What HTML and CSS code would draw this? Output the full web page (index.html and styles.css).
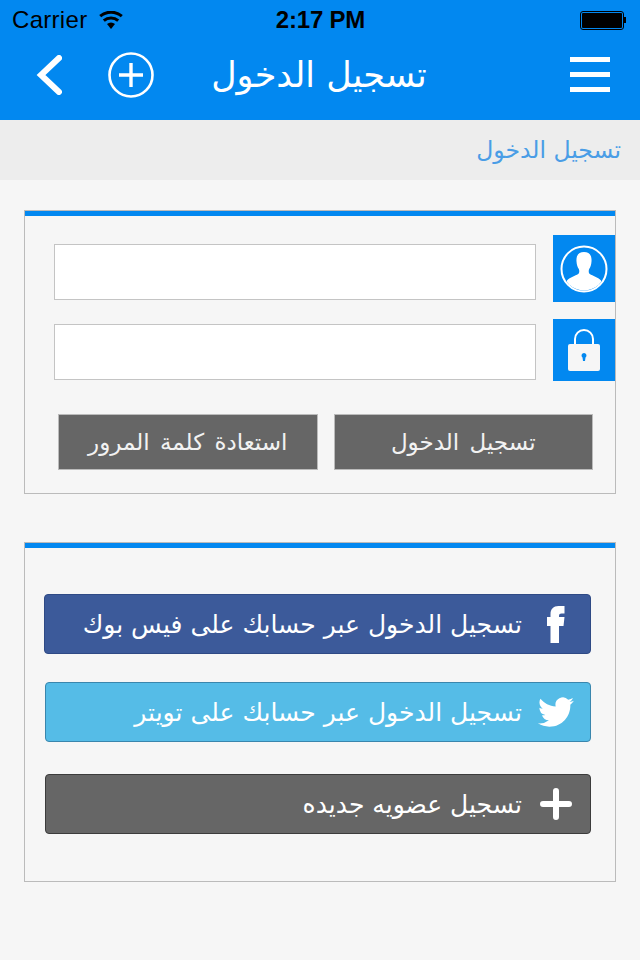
FILE: index.html
```html
<!DOCTYPE html>
<html lang="ar">
<head>
    <meta charset="utf-8">
    <title>تسجيل الدخول</title>
    <link rel="stylesheet" href="styles.css">
</head>
<body>
    <div class="header">
        <div class="status-bar">
            <div class="status-left">
                <span>Carrier</span>
                <svg class="wifi" width="24" height="18" viewBox="0 0 24 18">
                    <path d="M12 18l-4-5a6 6 0 0 1 8 0z" fill="#000"/>
                    <path d="M4.8 9.6a11 11 0 0 1 14.4 0M1.2 5.2a16.5 16.5 0 0 1 21.6 0" fill="none" stroke="#000" stroke-width="3"/>
                </svg>
            </div>
            <div class="status-time">2:17 PM</div>
            <div class="status-right">
                <div class="battery"><div class="battery-fill"></div></div>
                <div class="battery-tip"></div>
            </div>
        </div>
        <div class="nav-bar">
            <svg class="nav-back" width="26" height="40" viewBox="0 0 26 40">
                <path d="M23 3L5 20l18 17" fill="none" stroke="#fff" stroke-width="6" stroke-linecap="round" stroke-linejoin="miter"/>
            </svg>
            <svg class="nav-add" width="46" height="46" viewBox="0 0 46 46">
                <circle cx="23" cy="23" r="21.5" fill="none" stroke="#fff" stroke-width="2.6"/>
                <path d="M23 11v24M11 23h24" fill="none" stroke="#fff" stroke-width="3.4"/>
            </svg>
            <div class="nav-title">تسجيل الدخول</div>
            <div class="nav-menu">
                <span></span>
                <span></span>
                <span></span>
            </div>
        </div>
    </div>

    <div class="breadcrumb">تسجيل الدخول</div>

    <div class="card login-card">
        <div class="field field-user">
            <div class="input"></div>
            <div class="field-icon">
                <svg width="48" height="48" viewBox="0 0 48 48">
                    <defs><clipPath id="face"><circle cx="24" cy="24" r="21.5"/></clipPath></defs>
                    <circle cx="24" cy="24" r="22.5" fill="none" stroke="#fff" stroke-width="2"/>
                    <path clip-path="url(#face)" d="M24 7c-5.500 0-8 3.500-7.500 9.500.2 3 1 5.500 2.300 7.500.7 1.200.7 4-.6 5-3 2-8 3-11.200 6.500-1 1.500 0 14.500 17 14.500s18-13 17-14.500c-3.200-3.500-8.200-4.500-11.200-6.500-1.300-1-1.300-3.800-.6-5 1.300-2 2.100-4.500 2.300-7.500C32 10.500 29.500 7 24 7z" fill="#fff"/>
                </svg>
            </div>
        </div>
        <div class="field field-pass">
            <div class="input"></div>
            <div class="field-icon">
                <svg width="34" height="44" viewBox="0 0 34 44">
                    <path d="M8 20V11a9 9 0 0 1 18 0v9" fill="none" stroke="#fff" stroke-width="2"/>
                    <rect x="1" y="16" width="32" height="27" rx="2" fill="#f6f6f6"/>
                    <path d="M17 25a2.500 2.500 0 0 1 1.500 4.500l-.5 3.500h-2l-.5-3.500A2.500 2.500 0 0 1 17 25z" fill="#0288f0"/>
                </svg>
            </div>
        </div>
        <div class="login-actions">
            <a class="btn-gray">تسجيل الدخول</a>
            <a class="btn-gray">استعادة كلمة المرور</a>
        </div>
    </div>

    <div class="card social-card">
        <a class="social-btn facebook">
            <svg class="social-icon" width="36" height="37" viewBox="-9 0 36 37">
                <path d="M3.500 37V20H0v-9h3.500V8c0-5 3-8 8-8h6v7.500h-3c-1.700 0-2.500.800-2.500 2.500v1h5.500l-1 9h-4.500v17z" fill="#fff"/>
            </svg>
            <span>تسجيل الدخول عبر حسابك على فيس بوك</span>
        </a>
        <a class="social-btn twitter">
            <svg class="social-icon" width="36" height="30" viewBox="0 0 24 20">
                <path d="M23.950 2.570a10 10 0 0 1-2.820.780 4.960 4.960 0 0 0 2.160-2.730c-.950.560-2 .960-3.130 1.190a4.920 4.920 0 0 0-8.380 4.480C7.690 6.100 4.070 4.130 1.640 1.160a4.820 4.820 0 0 0-.67 2.480c0 1.710.87 3.210 2.190 4.100a4.900 4.900 0 0 1-2.230-.62v.06a4.920 4.920 0 0 0 3.950 4.830 5 5 0 0 1-2.210.08 4.940 4.940 0 0 0 4.600 3.420 9.870 9.870 0 0 1-6.100 2.110c-.39 0-.78-.02-1.170-.07a14 14 0 0 0 7.560 2.210c9.050 0 14-7.500 14-13.990 0-.21 0-.42-.02-.63a9.940 9.940 0 0 0 2.410-2.570z" fill="#fff"/>
            </svg>
            <span>تسجيل الدخول عبر حسابك على تويتر</span>
        </a>
        <a class="social-btn signup">
            <svg class="social-icon" width="36" height="36" viewBox="0 0 36 36">
                <path d="M18 5v26M5 18h26" fill="none" stroke="#fff" stroke-width="6" stroke-linecap="round"/>
            </svg>
            <span>تسجيل عضويه جديده</span>
        </a>
    </div>
</body>
</html>
```
FILE: styles.css
```css
body {
    margin: 0;
    background-color: #f6f6f6;
    font-family: "DejaVu Sans", sans-serif;
    color: #fff;
}
.header {
    background-color: #0288f0;
    height: 120px;
}
.status-bar {
    display: grid;
    grid-template-columns: 1fr auto 1fr;
    align-items: center;
    height: 40px;
    padding: 0 14px 0 12px;
    color: #000;
    font-family: "Liberation Sans", sans-serif;
    font-size: 24px;
}
.status-left {
    display: flex;
    align-items: center;
    gap: 12px;
    letter-spacing: 0.3px;
}
.wifi {
    margin-top: -1px;
}
.status-time {
    padding-left: 3px;
    font-weight: bold;
    letter-spacing: -0.2px;
}
.status-right {
    display: flex;
    align-items: center;
    justify-content: flex-end;
}
.battery {
    width: 40px;
    height: 15px;
    padding: 1px;
    border: 1px solid #000;
    border-radius: 3px;
}
.battery-fill {
    height: 100%;
    background-color: #000;
    border-radius: 1px;
}
.battery-tip {
    width: 2px;
    height: 6px;
    background-color: #000;
}
.nav-bar {
    display: flex;
    align-items: center;
    height: 70px;
    padding: 0 30px 0 36px;
}
.nav-add {
    margin-left: 46px;
}
.nav-title {
    flex: 1;
    text-align: center;
    font-size: 35px;
    padding-right: 86px;
}
.nav-menu {
    display: flex;
    flex-direction: column;
    gap: 10px;
    width: 40px;
    margin-bottom: 2px;
}
.nav-menu span {
    height: 5px;
    background-color: #fff;
}
.breadcrumb {
    direction: rtl;
    height: 60px;
    line-height: 60px;
    padding-right: 19px;
    background-color: #ededed;
    color: #4a9de6;
    font-size: 23.5px;
}
.card {
    margin: 30px 24px 0;
    background-color: #f6f6f6;
    border: 1px solid #bbb;
    box-shadow: inset 0 5px 0 #0288f0;
    box-sizing: border-box;
}
.login-card {
    height: 284px;
    padding-top: 24px;
}
.field {
    display: flex;
    justify-content: space-between;
    padding-left: 29px;
}
.field-user {
    height: 84px;
}
.field-pass {
    height: 95px;
}
.input {
    width: 482px;
    height: 56px;
    background-color: #fff;
    border: 1px solid #c4c4c4;
    box-sizing: border-box;
}
.field-user .input {
    margin-top: 9px;
}
.field-pass .input {
    margin-top: 5px;
}
.field-icon {
    display: flex;
    align-items: center;
    justify-content: center;
    width: 62px;
    background-color: #0288f0;
}
.field-user .field-icon {
    height: 67px;
}
.field-pass .field-icon {
    height: 62px;
}
.login-actions {
    display: flex;
    flex-direction: row-reverse;
    justify-content: flex-end;
    gap: 16px;
    padding: 0 22px 0 33px;
}
.btn-gray {
    display: block;
    width: 260px;
    height: 56px;
    line-height: 54px;
    text-align: center;
    background-color: #666;
    border: 1px solid #bbb;
    box-sizing: border-box;
    color: #f2f2f2;
    font-size: 23px;
    word-spacing: 3px;
}
.social-card {
    margin-top: 48px;
    height: 340px;
    padding: 51px 24px 0 19px;
}
.social-btn {
    direction: rtl;
    display: flex;
    align-items: center;
    gap: 16px;
    height: 60px;
    margin-bottom: 28px;
    padding-right: 16px;
    border: 1px solid #2f4a85;
    border-radius: 4px;
    box-sizing: border-box;
    font-size: 25px;
    color: #fff;
}
.social-icon {
    flex: none;
}
.facebook {
    background-color: #3c5a9a;
}
.twitter {
    margin-left: 1px;
    background-color: #55bce7;
    border-color: #3a86ad;
}
.signup {
    margin-top: 32px;
    margin-left: 1px;
    background-color: #666;
    border-color: #3c3c3c;
}
```
